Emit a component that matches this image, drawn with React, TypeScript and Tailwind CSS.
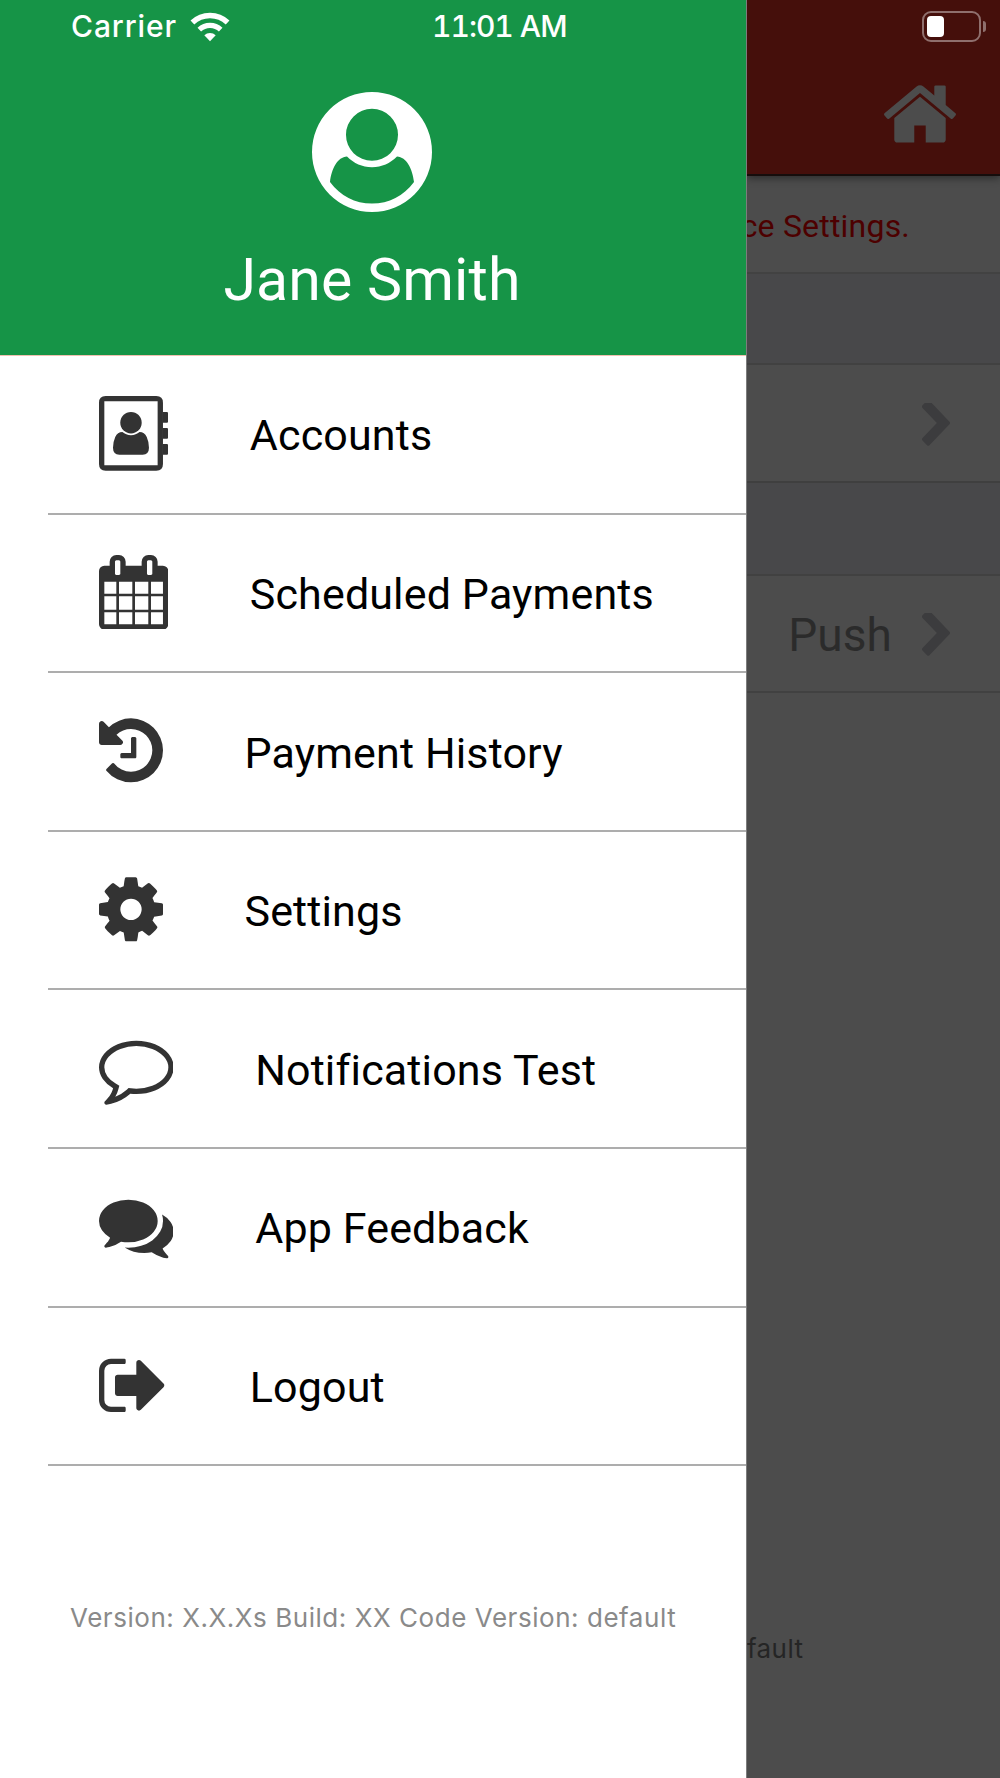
import type { ReactNode } from "react";

const ROBOTO = "font-['Roboto',sans-serif]";
const INTER = "font-['Inter',sans-serif]";

const CALENDAR =
  "M192 1664h288v-288h-288v288zm352 0h320v-288h-320v288zm-352-352h288v-320h-288v320zm352 0h320v-320h-320v320zm-352-384h288v-288h-288v288zm736 736h320v-288h-320v288zm-384-736h320v-288h-320v288zm768 736h288v-288h-288v288zm-384-352h320v-320h-320v320zm-352-864v-288q0-13-9.5-22.5t-22.5-9.5h-64q-13 0-22.5 9.5t-9.5 22.5v288q0 13 9.5 22.5t22.5 9.5h64q13 0 22.5-9.5t9.5-22.5zm736 864h288v-320h-288v320zm-384-384h320v-288h-320v288zm384 0h288v-288h-288v288zm32-480v-288q0-13-9.5-22.5t-22.5-9.5h-64q-13 0-22.5 9.5t-9.5 22.5v288q0 13 9.5 22.5t22.5 9.5h64q13 0 22.5-9.5t9.5-22.5zm384-64v1280q0 52-38 90t-90 38h-1408q-52 0-90-38t-38-90v-1280q0-52 38-90t90-38h128v-96q0-66 47-113t113-47h64q66 0 113 47t47 113v96h384v-96q0-66 47-113t113-47h64q66 0 113 47t47 113v96h128q52 0 90 38t38 90z";
const HISTORY =
  "M1664 896q0 156-61 298t-164 245-245 164-298 61q-172 0-327-72.5t-264-204.5q-7-10-6.5-22.5t8.5-20.5l137-138q10-9 25-9 16 2 23 12 73 95 179 147t225 52q104 0 198.5-40.5t163.5-109.5 109.5-163.5 40.5-198.5-40.5-198.5-109.5-163.5-163.5-109.5-198.5-40.5q-98 0-188 35.5t-160 101.5l137 138q31 30 14 69-17 40-59 40h-448q-26 0-45-19t-19-45v-448q0-42 40-59 39-17 69 14l130 129q107-101 244.5-156.5t284.5-55.5q156 0 298 61t245 164 164 245 61 298zm-640-288v448q0 14-9 23t-23 9h-320q-14 0-23-9t-9-23v-64q0-14 9-23t23-9h224v-352q0-14 9-23t23-9h64q14 0 23 9t9 23z";
const COG =
  "M1152 896q0-106-75-181t-181-75-181 75-75 181 75 181 181 75 181-75 75-181zm512-109v222q0 12-8 23t-20 13l-185 28q-19 54-39 91 35 50 107 138 10 12 10 25t-9 23q-27 37-99 108t-94 71q-12 0-26-9l-138-108q-44 23-91 38-16 136-29 186-7 28-36 28h-222q-14 0-24.5-8.5t-11.5-21.5l-28-184q-49-16-90-37l-141 107q-10 9-25 9-14 0-25-11-126-114-165-168-7-10-7-23 0-12 8-23 15-21 51-66.5t54-70.5q-27-50-41-99l-183-27q-13-2-21-12.5t-8-23.5v-222q0-12 8-23t19-13l186-28q14-46 39-92-40-57-107-138-10-12-10-24 0-10 9-23 26-36 98.5-107.5t94.5-71.5q13 0 26 10l138 107q44-23 91-38 16-136 29-186 7-28 36-28h222q14 0 24.5 8.5t11.5 21.5l28 184q49 16 90 37l142-107q9-9 24-9 13 0 25 10 129 119 165 170 7 8 7 22 0 12-8 23-15 21-51 66.5t-54 70.5q26 50 41 98l183 28q13 2 21 12.5t8 23.5z";
const COMMENT =
  "M896 384q-204 0-381.5 69.5t-282 187.5-104.5 255q0 112 71.5 213.5t201.5 175.5l87 50-27 96q-24 91-70 172 152-63 275-171l43-38 57 6q69 8 130 8 204 0 381.5-69.5t282-187.5 104.5-255-104.5-255-282-187.5-381.5-69.5zm896 512q0 174-120 321.5t-326 233-450 85.5q-70 0-145-8-198 175-460 242-49 14-114 22h-5q-15 0-27-10.5t-16-27.5v-1q-3-4-.5-12t2-10 4.5-9.5l6-9 7-8.5 8-9q7-8 31-34.5t34.5-38 31-39.5 32.5-51 27-59 26-76q-157-89-247.5-220t-90.5-281q0-174 120-321.5t326-233 450-85.5 450 85.5 326 233 120 321.5z";
const COMMENTS =
  "M1408 768q0 139-94 257t-256.5 186.5-353.5 68.5q-86 0-176-16-124 88-278 128-36 9-86 16h-3q-11 0-20.5-8t-11.5-21q-1-3-1-6.5t.5-6.5 2-6l2.5-5 3.5-5.5 4-5 4.5-5 4-4.5q5-6 23-25t26-29.5 22.5-29 25-38.5 20.5-44q-124-72-195-177t-71-224q0-139 94-257t256.5-186.5 353.5-68.5 353.5 68.5 256.5 186.5 94 257zm384 256q0 120-71 224.5t-195 176.5q10 24 20.5 44t25 38.5 22.5 29 26 29.5 23 25q1 1 4 4.5t4.5 5 4 5 3.5 5.5l2.5 5 2 6 .5 6.5-1 6.5q-3 14-13 22t-22 7q-50-7-86-16-154-40-278-128-90 16-176 16-271 0-472-132 58 4 88 4 161 0 309-45t264-129q125-92 192-212t67-257q0-77-23-152 129 71 204 178t75 230z";
const SIGN_OUT =
  "M704 1440q0 4 1 20t.5 26.5-3 23.5-10 19.5-20.5 6.5h-320q-119 0-203.5-84.5t-84.5-203.5v-704q0-119 84.5-203.5t203.5-84.5h320q13 0 22.5 9.5t9.5 22.5q0 4 1 20t.5 26.5-3 23.5-10 19.5-20.5 6.5h-320q-66 0-113 47t-47 113v704q0 66 47 113t113 47h312l11.5 1 11.5 3 8 5.5 7 9 2 13.5zm928-544q0 26-19 45l-544 544q-19 19-45 19t-45-19-19-45v-288h-448q-26 0-45-19t-19-45v-384q0-26 19-45t45-19h448v-288q0-26 19-45t45-19 45 19l544 544q19 19 19 45z";
const HOME =
  "M1472 992v480q0 26-19 45t-45 19h-384v-384h-256v384h-384q-26 0-45-19t-19-45v-480q0-1 .5-3t.5-3l575-474 575 474q1 2 1 6zm223-69l-62 74q-8 9-21 11h-3q-13 0-21-7l-692-577-692 577q-12 8-24 7-13-2-21-11l-62-74q-8-10-7-23.5t11-21.5l719-599q32-26 76-26t76 26l244 204v-195q0-14 9-23t23-9h192q14 0 23 9t9 23v408l219 182q10 8 11 21.5t-7 23.5z";
const CHEVRON =
  "M1363 877l-742 742q-19 19-45 19t-45-19l-166-166q-19-19-19-45t19-45l531-531-531-531q-19-19-19-45t19-45l166-166q19-19 45-19t45 19l742 742q19 19 19 45t-19 45z";

function AddressBook() {
  return (
    <>
      <path
        fillRule="evenodd"
        d="M160 0h1216q160 0 160 160v1472q0 160-160 160h-1216q-160 0-160-160v-1472q0-160 160-160zM128 128v1536h1280v-1536z"
      />
      <path d="M1536 384h96q32 0 32 32v192q0 32-32 32h-96zM1536 768h96q32 0 32 32v192q0 32-32 32h-96zM1536 1152h96q32 0 32 32v192q0 32-32 32h-96z" />
      <circle cx="768" cy="640" r="257" />
      <path d="M562 864q86 75 206 75t206-75q118 0 172 118t54 262q0 164-152 164h-560q-152 0-152-164 0-144 54-262t172-118z" />
    </>
  );
}

type Item = { label: string; viewBox: string; size: string; icon: ReactNode };

const ITEMS: Item[] = [
  { label: "Accounts", viewBox: "0 0 1664 1792", size: "w-[69.3px]", icon: <AddressBook /> },
  { label: "Scheduled Payments", viewBox: "64 0 1664 1792", size: "w-[69.3px]", icon: <path d={CALENDAR} /> },
  { label: "Payment History", viewBox: "128 0 1536 1792", size: "w-16", icon: <path d={HISTORY} /> },
  { label: "Settings", viewBox: "128 0 1536 1792", size: "w-16", icon: <path d={COG} /> },
  { label: "Notifications Test", viewBox: "0 0 1792 1792", size: "w-[74.7px]", icon: <path d={COMMENT} /> },
  { label: "App Feedback", viewBox: "0 0 1792 1792", size: "w-[74.7px]", icon: <path d={COMMENTS} /> },
  { label: "Logout", viewBox: "64 0 1664 1792", size: "w-[69.3px]", icon: <path d={SIGN_OUT} /> },
];

function Avatar() {
  return (
    <svg viewBox="0 0 120 120" className="size-[120px] shrink-0 fill-white">
      <path
        fillRule="evenodd"
        d="M60 0a60 60 0 1 1 0 120a60 60 0 1 1 0-120zM60 16.8a26 26 0 1 0 0 52a26 26 0 1 0 0-52zM35 64.6C25.5 65 19.5 77 18 90C28.5 104 43 111.6 60 111.6C77 111.6 91.5 104 102 90C100.5 77 94.5 65 85 64.6C78 71.6 70 75.2 60 75.2C50 75.2 42 71.6 35 64.6z"
      />
    </svg>
  );
}

function Wifi() {
  return (
    <svg viewBox="0 0 40 30" className="h-[30px] w-10">
      <path d="M2.4 10.5A25.5 25.5 0 0 1 37.6 10.5" fill="none" stroke="#fff" strokeWidth="5.4" />
      <path d="M9.3 17.6A15.6 15.6 0 0 1 30.7 17.6" fill="none" stroke="#fff" strokeWidth="5.2" />
      <path d="M14.3 23.3A8.3 8.3 0 0 1 25.7 23.3L20 29.3z" fill="#fff" />
    </svg>
  );
}

function Chevron() {
  return (
    <svg viewBox="346 128 1036 1536" className="mt-[3px] h-[43.5px] w-[28px] fill-[#3c3c3e]" preserveAspectRatio="none">
      <path d={CHEVRON} />
    </svg>
  );
}

export default function App() {
  return (
    <div className="flex h-[1778px] w-[1000px] overflow-hidden bg-[#4c4c4c]">
      <aside className="flex w-[747px] shrink-0 flex-col border-r border-[#7d7d7d] bg-white">
        <header className="flex h-[356px] shrink-0 flex-col border-b border-[#f0c0b0] bg-[#169447] text-white">
          <div className={`flex h-[54px] pl-[71px] text-[30px] leading-[53px] font-medium ${INTER}`}>
            <span className="w-[119px] tracking-[0.9px]">Carrier</span>
            <div className="pt-3">
              <Wifi />
            </div>
            <span className="ml-[202px] tracking-[-1px] whitespace-nowrap tabular-nums">11:01 AM</span>
          </div>
          <div className="flex flex-col items-center pt-[38px] pr-[2px]">
            <Avatar />
            <h1 className={`pt-[33px] text-[59px] leading-[70px] tracking-[0.1px] ${ROBOTO}`}>Jane Smith</h1>
          </div>
        </header>
        <nav className="ml-12 flex flex-col">
          {ITEMS.map((item) => (
            <a key={item.label} className="flex h-[158.6px] items-start border-b-2 border-[#adadad] pl-[50.5px]">
              <svg viewBox={item.viewBox} className={`mt-10 h-[74.7px] shrink-0 fill-[#333] ${item.size}`}>
                {item.icon}
              </svg>
              <span
                className={`ml-[82px] pt-[49.4px] text-[43px] leading-[60px] tracking-[0.14px] whitespace-nowrap text-black ${ROBOTO}`}
              >
                {item.label}
              </span>
            </a>
          ))}
        </nav>
        <p className={`mt-[132px] pl-[70px] text-[26px] leading-[40px] tracking-[0.54px] whitespace-nowrap text-[#8a8a8a] ${INTER}`}>
          Version: X.X.Xs Build: XX Code Version: default
        </p>
      </aside>
      <main className="flex min-w-0 flex-1 flex-col overflow-hidden">
        <header className="relative z-10 flex h-[176px] shrink-0 flex-col items-end border-b-2 border-[#160d0c] bg-[#450f0b] shadow-[0_2px_8px_rgba(0,0,0,0.45)]">
          <div className="mt-[11px] mr-[14px] flex items-center gap-[2.5px]">
            <div className="h-[31px] w-[59px] rounded-[9px] border-2 border-[#8f6f6d] p-[3px]">
              <div className="h-[21px] w-[17px] rounded-[4px] bg-white" />
            </div>
            <div className="h-[11px] w-[3px] rounded-r-full bg-[#8f6f6d]" />
          </div>
          <svg viewBox="0 0 1792 1792" className="mt-[32px] mr-[40.5px] size-[80px] fill-[#4c4c4c]">
            <path d={HOME} />
          </svg>
        </header>
        <p
          className={`flex h-[98px] shrink-0 justify-end border-b-2 border-[#424242] pt-[30px] pr-[90px] text-[32px] leading-[40px] whitespace-nowrap text-[#4d0000] ${ROBOTO}`}
        >
          <span className="tracking-[0.2px]">ce Settings.</span>
        </p>
        <div className="h-[91px] shrink-0 border-b-2 border-[#414141] bg-[#48484a]" />
        <div className="flex h-[118px] shrink-0 items-center justify-end border-b-2 border-[#3f3f3f] pr-[50px]">
          <Chevron />
        </div>
        <div className="h-[93px] shrink-0 border-b-2 border-[#414141] bg-[#48484a]" />
        <div className="flex h-[117px] shrink-0 items-center justify-end border-b-2 border-[#414141] pr-[50px]">
          <span className={`mr-[30px] pt-[3px] text-[46px] leading-[60px] tracking-[0.1px] text-[#2b2b2b] ${ROBOTO}`}>Push</span>
          <Chevron />
        </div>
        <p className={`mt-[936px] text-[26px] leading-[40px] tracking-[0.4px] text-[#252525] ${INTER}`}>fault</p>
      </main>
    </div>
  );
}
